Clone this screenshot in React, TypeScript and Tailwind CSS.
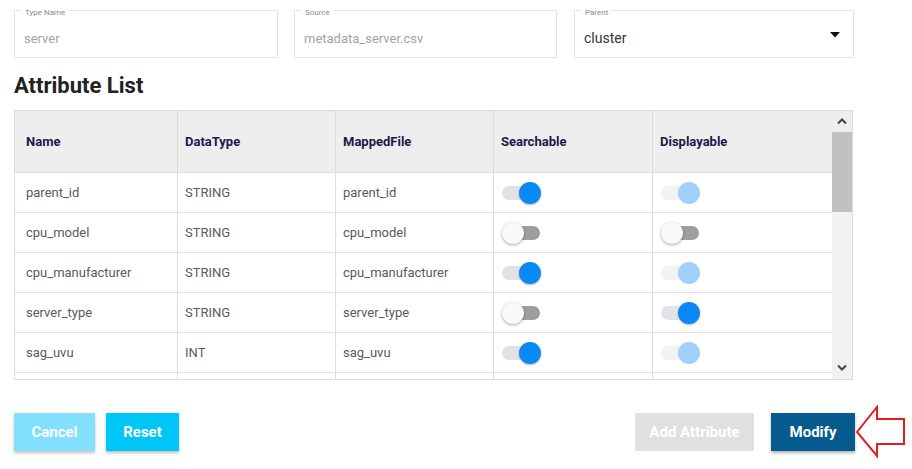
import React from "react";

type ToggleState = "on" | "onDisabled" | "off";

const rows: { name: string; type: string; file: string; search: ToggleState; display: ToggleState }[] = [
  { name: "parent_id", type: "STRING", file: "parent_id", search: "on", display: "onDisabled" },
  { name: "cpu_model", type: "STRING", file: "cpu_model", search: "off", display: "off" },
  { name: "cpu_manufacturer", type: "STRING", file: "cpu_manufacturer", search: "on", display: "onDisabled" },
  { name: "server_type", type: "STRING", file: "server_type", search: "off", display: "on" },
  { name: "sag_uvu", type: "INT", file: "sag_uvu", search: "on", display: "onDisabled" },
];

const Toggle = ({ state }: { state: ToggleState }) => {
  if (state === "off") {
    return (
      <div className="relative h-[14px] w-[38px] rounded-full bg-[#9e9e9e]">
        <div className="absolute left-0 top-1/2 h-[22px] w-[22px] -translate-y-1/2 rounded-full bg-[#fafafa] shadow-[0_1px_3px_rgba(0,0,0,0.35)]" />
      </div>
    );
  }
  const disabled = state === "onDisabled";
  return (
    <div className={`relative h-[14px] w-[38px] rounded-full ${disabled ? "bg-[#f1f2f4]" : "bg-[#dfe3e8]"}`}>
      <div
        className={`absolute -right-[1px] top-1/2 h-[22px] w-[22px] -translate-y-1/2 rounded-full ${
          disabled ? "bg-[#9fd1fc]" : "bg-[#0a88f4] shadow-[0_1px_2px_rgba(0,0,0,0.3)]"
        }`}
      />
    </div>
  );
};

const Field = ({ label, value, width, muted, select }: { label: string; value: string; width: string; muted?: boolean; select?: boolean }) => (
  <div className={`relative h-[48px] ${width} border border-[#e3e3e3] flex items-center pl-[9px] pr-[13px] pt-[9px]`}>
    <span className="absolute left-[6px] -top-[3px] bg-white px-[4px] text-[8px] leading-[10px] text-[#8a8a8a]">{label}</span>
    <span className={`flex-1 ${muted ? "text-[13px] text-[#a3a3a3]" : "text-[14px] text-[#333]"}`}>{value}</span>
    {select && (
      <svg width="10" height="6" viewBox="0 0 10 6" className="-mt-[7px]">
        <path d="M0 0 H10 L5 5.5 Z" fill="#111" />
      </svg>
    )}
  </div>
);

const cols = ["w-[163px]", "w-[158px]", "w-[158px]", "w-[159px]", "w-[179px]"];

export default function App() {
  return (
    <div className="w-[912px] h-[469px] bg-white font-['Roboto',sans-serif] overflow-hidden">
      <div className="flex pt-[10px] pl-[14px]">
        <Field label="Type Name" value="server" width="w-[264px]" muted />
        <div className="w-[16px]" />
        <Field label="Source" value="metadata_server.csv" width="w-[263px]" muted />
        <div className="w-[17px]" />
        <Field label="Parent" value="cluster" width="w-[280px]" select />
      </div>

      <h2 className="mt-[15px] ml-[14px] text-[22px] leading-[26px] font-bold text-[#222]">Attribute List</h2>

      <div className="mt-[11px] ml-[14px] w-[839px] h-[270px] border border-[#dcdcdc] flex overflow-hidden">
        <div className="flex flex-col w-[817px]">
          <div className="flex h-[62px] shrink-0 bg-[#eeeeee] border-b border-[#dcdcdc]">
            {["Name", "DataType", "MappedFile", "Searchable", "Displayable"].map((h, i) => (
              <div
                key={h}
                className={`${cols[i]} flex items-center ${i === 0 ? "pl-[11px]" : "pl-[7px]"} text-[13px] font-bold text-[#1d1848] ${i < 4 ? "border-r border-[#dcdcdc]" : ""}`}
              >
                {h}
              </div>
            ))}
          </div>
          {rows.map((r) => (
            <div key={r.name} className="flex h-[40px] shrink-0 border-b border-[#e2e2e2] text-[13px] text-[#5a5a5a]">
              <div className={`${cols[0]} flex items-center pl-[11px] border-r border-[#dcdcdc]`}>{r.name}</div>
              <div className={`${cols[1]} flex items-center pl-[7px] border-r border-[#dcdcdc]`}>{r.type}</div>
              <div className={`${cols[2]} flex items-center pl-[7px] border-r border-[#dcdcdc]`}>{r.file}</div>
              <div className={`${cols[3]} flex items-center pl-[8px] border-r border-[#dcdcdc]`}>
                <Toggle state={r.search} />
              </div>
              <div className={`${cols[4]} flex items-center pl-[8px]`}>
                <Toggle state={r.display} />
              </div>
            </div>
          ))}
          <div className="flex flex-1">
            {cols.map((c, i) => (
              <div key={i} className={`${c} ${i < 4 ? "border-r border-[#dcdcdc]" : ""}`} />
            ))}
          </div>
        </div>
        <div className="w-[20px] flex flex-col bg-[#f1f1f1]">
          <div className="h-[21px] bg-[#eeeeee] flex items-center justify-center">
            <svg width="10" height="7" viewBox="0 0 10 7">
              <path d="M1 5.5 L5 1.5 L9 5.5" stroke="#444" strokeWidth="2" fill="none" />
            </svg>
          </div>
          <div className="h-[80px] bg-[#c1c1c1]" />
          <div className="flex-1" />
          <div className="h-[18px] flex items-start justify-center pt-[3px]">
            <svg width="10" height="7" viewBox="0 0 10 7">
              <path d="M1 1.5 L5 5.5 L9 1.5" stroke="#444" strokeWidth="2" fill="none" />
            </svg>
          </div>
        </div>
      </div>

      <div className="mt-[33px] flex items-start pl-[14px]">
        <button className="h-[38px] w-[81px] bg-[#82dffd] text-white text-[15px] font-bold shadow-[0_2px_3px_rgba(0,0,0,0.25)]">Cancel</button>
        <button className="ml-[11px] h-[38px] w-[73px] bg-[#00c6f7] text-white text-[15px] font-bold shadow-[0_2px_3px_rgba(0,0,0,0.25)]">Reset</button>
        <div className="flex-1" />
        <button className="h-[38px] w-[119px] bg-[#e0e0e0] text-white text-[15px] font-bold">Add Attribute</button>
        <button className="ml-[17px] h-[38px] w-[84px] bg-[#065b8e] text-white text-[15px] font-bold shadow-[0_2px_3px_rgba(0,0,0,0.3)]">Modify</button>
        <svg width="51" height="56" viewBox="0 0 51 56" className="-mt-[8px] ml-[1px] mr-[5px]">
          <path d="M1 27 L21 2 L21 14 L48 14 L48 39 L21 39 L21 51 Z" fill="white" stroke="#e31b1b" strokeWidth="2" strokeLinejoin="miter" />
        </svg>
      </div>
    </div>
  );
}
